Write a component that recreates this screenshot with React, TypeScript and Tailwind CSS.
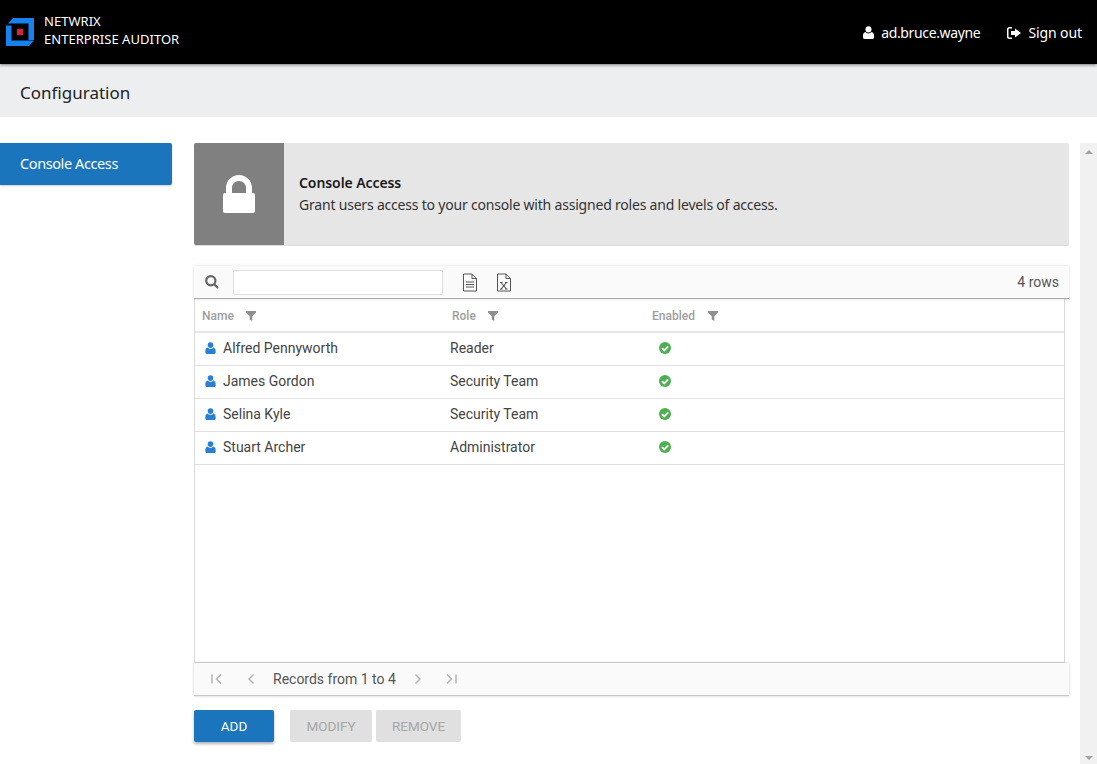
import React from "react";

const User = ({ className }: { className: string }) => (
  <svg viewBox="0 0 12 14" className={className} fill="currentColor">
    <circle cx="6" cy="3.6" r="3.3" />
    <path d="M2.6 6.4C3.5 7.4 4.7 8 6 8s2.500-.6 3.400-1.600C11 6.800 12 8.200 12 10.300v1.900c0 1-.8 1.800-1.800 1.800H1.800C.8 14 0 13.200 0 12.200v-1.900C0 8.200 1 6.800 2.600 6.400z" />
  </svg>
);

const Filter = () => (
  <svg viewBox="0 0 10 10" className="w-[10px] h-[10px] text-[#8f8f8f]" fill="currentColor">
    <path d="M0 0h10v1.500L6.300 5.200V10L3.700 8.600V5.200L0 1.500z" />
  </svg>
);

const Check = () => (
  <svg viewBox="0 0 12 12" className="w-[12px] h-[12px]">
    <circle cx="6" cy="6" r="6" fill="#4caf50" />
    <path d="M3 6.200l2.200 2.200L9.200 4.400" fill="none" stroke="#fff" strokeWidth="1.800" />
  </svg>
);

const Doc = ({ x }: { x?: boolean }) => (
  <svg viewBox="0 0 16 19" className="w-[16px] h-[19px]" fill="none" stroke="#555" strokeWidth="1">
    <path d="M1.500 1h8.500l4.500 4.500V18h-13z" />
    <path d="M10 1v4.500h4.500" />
    {x ? (
      <path d="M5 9.500l5.500 6.500M10.500 9.500L5 16M4 9.500h2.500M9 9.500h2.500M4 16h2.500M9 16h2.500" strokeWidth="1.100" />
    ) : (
      <path d="M4 9h8M4 11.500h8M4 14h8" />
    )}
  </svg>
);

const Chevron = ({ dir, bar }: { dir: "l" | "r"; bar?: boolean }) => (
  <svg viewBox="0 0 14 12" className="w-[14px] h-[12px]" fill="none" stroke="#b5b5b5" strokeWidth="1.500">
    {dir === "l" ? (
      <>
        {bar && <path d="M2 1.500v9" />}
        <path d={bar ? "M11 1.500L6.500 6l4.500 4.500" : "M9.500 1.500L5 6l4.500 4.500"} />
      </>
    ) : (
      <>
        <path d={bar ? "M3 1.500L7.500 6 3 10.500" : "M4.500 1.500L9 6l-4.500 4.500"} />
        {bar && <path d="M12 1.500v9" />}
      </>
    )}
  </svg>
);

const rows = [
  ["Alfred Pennyworth", "Reader"],
  ["James Gordon", "Security Team"],
  ["Selina Kyle", "Security Team"],
  ["Stuart Archer", "Administrator"],
];

export default function App() {
  return (
    <div className="h-[764px] w-[1097px] overflow-hidden bg-white font-['Noto_Sans',sans-serif] text-[#222]">
      <header className="relative z-10 h-[64px] bg-black text-white flex items-center justify-between pl-[6px] pr-[15px] shadow-[0_1px_3px_rgba(0,0,0,0.5)]">
        <div className="flex items-center gap-[10px]">
          <svg viewBox="0 0 28 28" className="w-[28px] h-[28px]">
            <path d="M7 0H28V22H22.500V5.500H2L7 0z" fill="#1682f0" />
            <path d="M0 7.500H5.500V22.500H28L23 28H0V7.500z" fill="#1682f0" />
            <rect x="10.800" y="10.800" width="6.500" height="6.500" rx="1" fill="#c8283c" />
          </svg>
          <div className="text-[13px] leading-[18px] font-normal pb-[5px] tracking-[0.03px]">
            <div>NETWRIX</div>
            <div>ENTERPRISE AUDITOR</div>
          </div>
        </div>
        <div className="flex items-center text-[14px] pt-[1px]">
          <User className="w-[11px] h-[13px] mr-[7px]" />
          <span className="tracking-[-0.35px]">ad.bruce.wayne</span>
          <svg viewBox="0 0 14 12" className="w-[14px] h-[12px] ml-[27px] mr-[7px]" fill="#fff">
            <path d="M5 0v1.500H2.500c-.6 0-1 .4-1 1v7c0 .6.400 1 1 1H5V12H2.300C1 12 0 11 0 9.700V2.300C0 1 1 0 2.300 0H5z" />
            <path d="M8 1.500L14 6l-6 4.500V8H4V4h4V1.500z" />
          </svg>
          <span className="tracking-[-0.1px]">Sign out</span>
        </div>
      </header>

      <div className="h-[53px] bg-[#eceef0] flex items-center pl-[20px] pt-[5px] text-[17px] text-[#222]">
        Configuration
      </div>

      <div className="flex pt-[26px]">
        <nav className="w-[172px] shrink-0">
          <div className="h-[42px] bg-[#1b75bc] rounded-r-[2px] shadow-[0_1px_2px_rgba(0,0,0,0.2)] flex items-center pl-[20px] text-white text-[14.500px] tracking-[-0.4px]">
            Console Access
          </div>
        </nav>

        <main className="w-[875px] ml-[22px] shrink-0">
          <section className="h-[103px] flex bg-[#e6e6e6] rounded-[2px] border-b border-[#dcdcdc]">
            <div className="w-[90px] bg-[#808080] rounded-l-[2px] flex items-center justify-center">
              <svg viewBox="0 0 32 38" className="w-[32px] h-[38px]" fill="#fff">
                <path d="M3 20V13C3 5.500 9 0 16 0s13 5.500 13 13v7h-6V13c0-4-3-7-7-7s-7 3-7 7v7H3z" />
                <rect x="0" y="18" width="32" height="20" rx="2" />
              </svg>
            </div>
            <div className="pl-[15px] flex flex-col justify-center">
              <div className="text-[14px] leading-[22px] font-semibold text-[#1a1a1a] tracking-[-0.08px]">Console Access</div>
              <div className="text-[14px] leading-[22px] text-[#333] tracking-[-0.2px]">
                Grant users access to your console with assigned roles and levels of access.
              </div>
            </div>
          </section>

          <div className="font-['Roboto',sans-serif] mt-[20px]">
            <div className="relative h-[33px] bg-[#fafafa] border-b border-[#a8a8a8] shadow-[0_0_3px_rgba(0,0,0,0.15)] flex items-center pl-[11px] pr-[10px]">
              <svg viewBox="0 0 14 14" className="w-[14px] h-[14px]" fill="none" stroke="#666" strokeWidth="2.200">
                <circle cx="5.800" cy="5.800" r="4.600" />
                <path d="M9.200 9.200L13 13" />
              </svg>
              <div className="ml-[14px] w-[210px] h-[25px] bg-white border border-[#dedede] rounded-[1px]" />
              <div className="ml-[19px]"><Doc /></div>
              <div className="ml-[18px]"><Doc x /></div>
              <div className="ml-auto text-[14px] text-[#555]">4 rows</div>
            </div>

            <div className="w-[871px] h-[364px] bg-white border-x border-b border-[#d9d9d9]">
              <div className="flex items-center h-[34px] pt-[2px] border-b-2 border-[#e6e6e6] text-[12px] font-medium text-[#9e9e9e]">
                <div className="w-[250px] pl-[7px] flex items-center gap-[12px]">Name <Filter /></div>
                <div className="w-[200px] pl-[7px] flex items-center gap-[12px]">Role <Filter /></div>
                <div className="pl-[7px] flex items-center gap-[13px]">Enabled <Filter /></div>
              </div>
              {rows.map(([name, role]) => (
                <div key={name} className="flex items-center h-[33px] pb-[2px] border-b border-[#e0e0e0] text-[14px] text-[#444]">
                  <div className="w-[250px] pl-[10px] flex items-center">
                    <User className="w-[11px] h-[12px] text-[#2a7fd5] mr-[7px]" />
                    {name}
                  </div>
                  <div className="w-[200px] pl-[5px]">{role}</div>
                  <div className="pl-[14px] flex items-center"><Check /></div>
                </div>
              ))}
            </div>

            <div className="h-[33px] bg-[#fafafa] border-b border-[#c8c8c8] shadow-[0_0_3px_rgba(0,0,0,0.2)] flex items-center pl-[16px] text-[14px] text-[#555]">
              <Chevron dir="l" bar />
              <div className="ml-[20px]"><Chevron dir="l" /></div>
              <span className="ml-[15px]">Records from 1 to 4</span>
              <div className="ml-[15px]"><Chevron dir="r" /></div>
              <div className="ml-[19px]"><Chevron dir="r" bar /></div>
            </div>

            <div className="flex mt-[14px] text-[13.500px] font-['Roboto',sans-serif]">
              <button className="w-[80px] h-[32px] pt-[1px] bg-[#1b75bc] text-white rounded-[2px] shadow-[0_2px_3px_rgba(0,0,0,0.3)]">ADD</button>
              <button className="ml-[16px] w-[82px] h-[32px] pt-[1px] bg-[#e0e0e0] text-[#a6a6a6] rounded-[2px]">MODIFY</button>
              <button className="ml-[4px] w-[85px] h-[32px] pt-[1px] bg-[#e0e0e0] text-[#a6a6a6] rounded-[2px]">REMOVE</button>
            </div>
          </div>
        </main>

        <aside className="ml-[11px] w-[17px] h-[621px] bg-[#f1f1f1] flex flex-col items-center justify-between pt-[7px] pb-[4px] shrink-0">
          <div className="w-0 h-0 border-x-[4px] border-x-transparent border-b-[4px] border-b-[#a3a3a3]" />
          <div className="w-0 h-0 border-x-[4px] border-x-transparent border-t-[4px] border-t-[#a3a3a3]" />
        </aside>
      </div>
    </div>
  );
}
